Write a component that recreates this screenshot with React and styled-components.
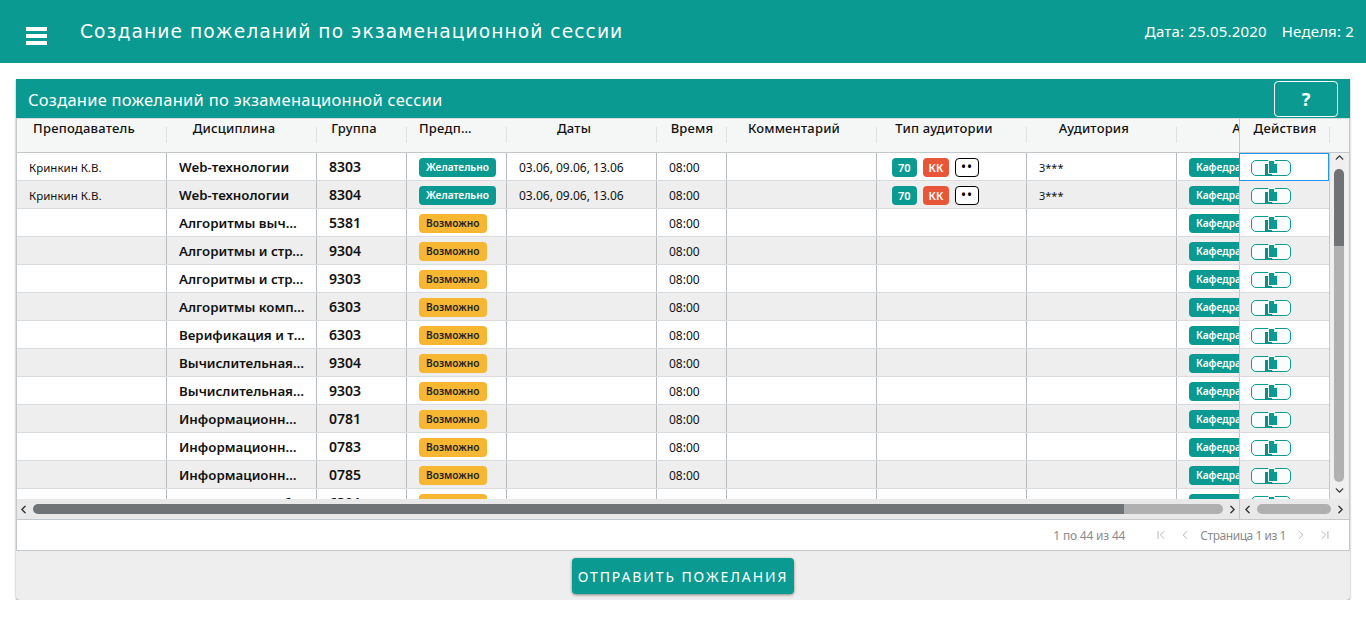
import React from 'react';
import styled, { createGlobalStyle } from 'styled-components';
import { ChevronLeft, ChevronRight, ChevronUp, ChevronDown, ChevronFirst, ChevronLast } from 'lucide-react';

const TEAL = '#0a9a91';
const LINE = '#c4c8ca';

const GlobalStyle = createGlobalStyle`
  html, body {
    margin: 0;
    padding: 0;
    background: #fff;
    font-family: "Noto Sans", "Open Sans", sans-serif;
    color: #111;
  }
  * { box-sizing: border-box; }
`;

const TopBar = styled('header')`
  display: flex;
  align-items: center;
  height: 63px;
  padding: 0 12px 0 26px;
  background: ${TEAL};
  color: #fff;
`;

const Burger = styled('div')`
  display: flex;
  flex-direction: column;
  gap: 3px;
  width: 21px;
  margin-top: 9px;
  margin-right: 33px;
  span {
    height: 4px;
    background: #fff;
  }
`;

const AppTitle = styled('h1')`
  flex: 1;
  margin: 0;
  font-family: "DejaVu Sans", sans-serif;
  font-size: 18.7px;
  font-weight: 400;
  letter-spacing: 1.05px;
`;

const TopInfo = styled('span')`
  margin-left: 15px;
  margin-bottom: 2px;
  font-size: 15px;
  letter-spacing: 0.18px;
`;

const Panel = styled('section')`
  margin: 16px 16px 0;
  height: 521px;
  display: flex;
  flex-direction: column;
  background: #eee;
  border-radius: 0 0 4px 4px;
  box-shadow: 0 1px 2px rgba(0, 0, 0, 0.45);
`;

const PanelHead = styled('div')`
  display: flex;
  align-items: center;
  justify-content: space-between;
  height: 39px;
  padding: 0 12px;
  background: ${TEAL};
  color: #fff;
`;

const PanelTitle = styled('h2')`
  margin: 1px 0 0;
  font-size: 16.5px;
  font-weight: 400;
  letter-spacing: 0.25px;
`;

const HelpButton = styled('button')`
  width: 64px;
  height: 36px;
  margin-top: 1px;
  border: 1px solid #fff;
  border-radius: 4px;
  background: transparent;
  color: #fff;
  font-family: inherit;
  font-size: 18px;
  font-weight: 700;
`;

const Grid = styled('div')`
  display: grid;
  grid-template-columns: 1222px 91px 1fr;
  grid-template-rows: 34px 346px 21px 30px;
  height: 433px;
  border: 1px solid ${LINE};
  border-top-color: #d8dadb;
  background: #fff;
`;

const HeaderRow = styled('div')`
  display: flex;
  min-width: 0;
  overflow: hidden;
  background: #f5f7f7;
  border-bottom: 1px solid ${LINE};
  ${(p) => p.$pinned && `border-left: 1px solid ${LINE};`}
`;

const HeaderCell = styled('div')`
  position: relative;
  flex: 0 0 ${(p) => p.$w}px;
  min-width: 0;
  padding: 0 ${(p) => (p.$left ? 32 : 28)}px 0 12px;
  font-size: 13px;
  font-weight: 500;
  line-height: 18px;
  letter-spacing: 0.2px;
  text-align: ${(p) => (p.$left ? 'left' : 'center')};
  white-space: nowrap;
  &::after {
    content: '';
    position: absolute;
    right: 0;
    top: 8px;
    height: 16px;
    border-right: 1px solid #dfe2e3;
  }
  ${(p) => p.$bare && 'padding: 0;'}
`;

const Ellipsis = styled('span')`
  display: block;
  overflow: hidden;
  text-overflow: ellipsis;
`;

const Corner = styled('div')`
  background: #f5f7f7;
  border-bottom: 1px solid ${LINE};
`;

const RowsView = styled('div')`
  min-width: 0;
  overflow: hidden;
  ${(p) => p.$pinned && `border-right: 1px solid ${LINE};`}
`;

const Row = styled('div')`
  display: flex;
  height: 28px;
  background: ${(p) => (p.$odd ? '#eee' : '#fff')};
  border-bottom: 1px solid #d9dcde;
`;

const Cell = styled('div')`
  flex: 0 0 ${(p) => p.$w}px;
  min-width: 0;
  display: flex;
  align-items: center;
  gap: 6px;
  padding: ${(p) => (p.$strong ? 0 : 1)}px ${(p) => (p.$strong ? 11 : 12)}px 0 ${(p) => p.$pad || 12}px;
  overflow: hidden;
  font-size: ${(p) => p.$size || 12}px;
  font-weight: ${(p) => (p.$strong ? 600 : 400)};
  white-space: nowrap;
  border-right: 1px solid #b9bcbe;
`;

const CellText = styled('span')`
  overflow: hidden;
  text-overflow: ellipsis;
`;

const Tag = styled('span')`
  flex: none;
  height: 19px;
  padding: 0 ${(p) => (p.$wide ? 7 : 6)}px;
  border-radius: 4px;
  background: ${(p) => p.$bg};
  color: ${(p) => p.$fg || '#fff'};
  font-size: ${(p) => (p.$wide ? 10.2 : 11)}px;
  font-weight: 600;
  line-height: 19px;
  ${(p) => p.$outlined && 'border: 1px solid #000; padding: 0 5px; font-size: 12px; line-height: 15px; letter-spacing: 1.5px;'}
`;

const ActionCell = styled('div')`
  height: 28px;
  display: flex;
  align-items: center;
  padding: 2px 0 0 11px;
  border-left: 1px solid ${LINE};
  background: ${(p) => (p.$odd ? '#eee' : '#fff')};
  border-bottom: 1px solid #d9dcde;
  ${(p) => p.$focused && 'outline: 1px solid #2196f3; outline-offset: -1px;'}
`;

const ActionButton = styled('button')`
  display: flex;
  align-items: center;
  justify-content: center;
  width: 40px;
  height: 16px;
  padding: 0;
  border: 1px solid ${TEAL};
  border-radius: 5px;
  background: #fafdfd;
`;

const VScroll = styled('div')`
  display: flex;
  flex-direction: column;
  align-items: center;
  padding: 0 1px 2px 0;
  background: #efefef;
  color: #333;
  svg:first-child {
    margin-top: -2px;
  }
`;

const VThumb = styled('div')`
  flex: 1;
  width: 10px;
  margin: 5px 0 2px;
  border-radius: 5px;
  background: linear-gradient(#707376 0 77px, #b0b0b0 77px);
`;

const HScroll = styled('div')`
  display: flex;
  align-items: center;
  padding: 0 ${(p) => (p.$pinned ? '2px 0 1px' : '0')};
  background: #e9e9e9;
  border-bottom: 1px solid ${LINE};
  color: #333;
  ${(p) => p.$pinned && `grid-column: 2 / -1; border-left: 1px solid ${LINE};`}
`;

const HThumb = styled('div')`
  flex: 1;
  height: 10px;
  margin: 0 3px;
  border-radius: 5px;
  background: ${(p) => p.$bg};
`;

const Pager = styled('div')`
  grid-column: 1 / -1;
  display: flex;
  align-items: center;
  justify-content: flex-end;
  padding-right: 17px;
  color: #8c8c8c;
  font-size: 12px;
  letter-spacing: -0.2px;
`;

const PagerCount = styled('span')`
  margin-right: 29px;
`;

const PagerLabel = styled('span')`
  margin: 0 8px;
  letter-spacing: -0.45px;
`;

const PagerIcon = styled('span')`
  display: flex;
  margin-left: ${(p) => p.$gap || 0}px;
  color: #a8a8a8;
`;

const Footer = styled('div')`
  flex: 1;
  display: flex;
  justify-content: center;
  padding-top: 7px;
`;

const SendButton = styled('button')`
  width: 222px;
  height: 36px;
  padding: 0;
  border: 0;
  border-radius: 4px;
  background: ${TEAL};
  color: #fff;
  font-family: inherit;
  font-size: 14px;
  letter-spacing: 1.9px;
  white-space: nowrap;
  box-shadow: 0 1px 3px rgba(0, 0, 0, 0.45);
`;

const COLUMNS = [
  { title: 'Преподаватель', w: 150 },
  { title: 'Дисциплина', w: 150 },
  { title: 'Группа', w: 90 },
  { title: 'Предпочтение', w: 100, left: true },
  { title: 'Даты', w: 150 },
  { title: 'Время', w: 70, bare: true },
  { title: 'Комментарий', w: 150 },
  { title: 'Тип аудитории', w: 150 },
  { title: 'Аудитория', w: 150 },
  { title: 'Автор', w: 165 },
];

const plain = (discipline, group) => ({ discipline, group });
const ROWS = [
  { teacher: 'Кринкин К.В.', discipline: 'Web-технологии', group: '8303', wish: true },
  { teacher: 'Кринкин К.В.', discipline: 'Web-технологии', group: '8304', wish: true },
  plain('Алгоритмы вычислительной геометрии', '5381'),
  plain('Алгоритмы и структуры данных', '9304'),
  plain('Алгоритмы и структуры данных', '9303'),
  plain('Алгоритмы компьютерной графики', '6303'),
  plain('Верификация и тестирование', '6303'),
  plain('Вычислительная математика', '9304'),
  plain('Вычислительная математика', '9303'),
  plain('Информационные технологии', '0781'),
  plain('Информационные технологии', '0783'),
  plain('Информационные технологии', '0785'),
  plain('Компьютерная безопасность', '6301'),
];

const CopyIcon = () => (
  <svg width="13" height="16" viewBox="0 0 13 16" style={{ flex: 'none' }}>
    <path d="M0 4h7v12H0z" fill="#0a8f87" />
    <path d="M3.500 .5h6l3 3v10h-9z" fill="#0a9a91" stroke="#fff" strokeWidth="1" />
    <path d="M9 0v4h4z" fill="#dff3f1" />
  </svg>
);

const Actions = ({ index }) => (
  <ActionCell $odd={index % 2 === 1} $focused={index === 0}>
    <ActionButton>
      <CopyIcon />
    </ActionButton>
  </ActionCell>
);

const App = () => {
  return (
    <>
      <GlobalStyle />
      <TopBar>
        <Burger>
          <span />
          <span />
          <span />
        </Burger>
        <AppTitle>Создание пожеланий по экзаменационной сессии</AppTitle>
        <TopInfo>Дата: 25.05.2020</TopInfo>
        <TopInfo>Неделя: 2</TopInfo>
      </TopBar>
      <Panel>
        <PanelHead>
          <PanelTitle>Создание пожеланий по экзаменационной сессии</PanelTitle>
          <HelpButton>?</HelpButton>
        </PanelHead>
        <Grid>
          <HeaderRow>
            {COLUMNS.map((col) => (
              <HeaderCell key={col.title} $w={col.w} $left={col.left} $bare={col.bare}>
                <Ellipsis>{col.title}</Ellipsis>
              </HeaderCell>
            ))}
          </HeaderRow>
          <HeaderRow $pinned>
            <HeaderCell $w={90} $bare>
              Действия
            </HeaderCell>
          </HeaderRow>
          <Corner />

          <RowsView>
            {ROWS.map((row, i) => (
              <Row key={i} $odd={i % 2 === 1}>
                <Cell $w={150} $size={11.5}>{row.teacher}</Cell>
                <Cell $w={150} $size={13.3} $strong>
                  <CellText>{row.discipline}</CellText>
                </Cell>
                <Cell $w={90} $size={14} $strong>
                  {row.group}
                </Cell>
                <Cell $w={100}>
                  {row.wish ? (
                    <Tag $bg={TEAL} $wide>Желательно</Tag>
                  ) : (
                    <Tag $bg="#f7b733" $fg="#222" $wide>Возможно</Tag>
                  )}
                </Cell>
                <Cell $w={150}>{row.wish && '03.06, 09.06, 13.06'}</Cell>
                <Cell $w={70}>08:00</Cell>
                <Cell $w={150} />
                <Cell $w={150} $pad={15}>
                  {row.wish && (
                    <>
                      <Tag $bg={TEAL}>70</Tag>
                      <Tag $bg="#e8563a">КК</Tag>
                      <Tag $bg="#fff" $fg="#000" $outlined>••</Tag>
                    </>
                  )}
                </Cell>
                <Cell $w={150} $size={11}>{row.wish && '3***'}</Cell>
                <Cell $w={165}>
                  <Tag $bg={TEAL} $wide>Кафедра</Tag>
                </Cell>
              </Row>
            ))}
          </RowsView>
          <RowsView $pinned>
            {ROWS.map((row, i) => (
              <Actions key={i} index={i} />
            ))}
          </RowsView>
          <VScroll>
            <ChevronUp size={13} strokeWidth={2.5} />
            <VThumb />
            <ChevronDown size={13} strokeWidth={2.5} />
          </VScroll>

          <HScroll>
            <ChevronLeft size={13} strokeWidth={2.5} />
            <HThumb $bg="linear-gradient(90deg, #707376 0 1091px, #b0b0b0 1091px)" />
            <ChevronRight size={13} strokeWidth={2.5} />
          </HScroll>
          <HScroll $pinned>
            <ChevronLeft size={13} strokeWidth={2.5} />
            <HThumb $bg="#b0b0b0" />
            <ChevronRight size={13} strokeWidth={2.5} />
          </HScroll>

          <Pager>
            <PagerCount>1 по 44 из 44</PagerCount>
            <PagerIcon><ChevronFirst size={14} strokeWidth={1.5} /></PagerIcon>
            <PagerIcon $gap={10}><ChevronLeft size={14} strokeWidth={1.5} /></PagerIcon>
            <PagerLabel>Страница 1 из 1</PagerLabel>
            <PagerIcon><ChevronRight size={14} strokeWidth={1.5} /></PagerIcon>
            <PagerIcon $gap={10}><ChevronLast size={14} strokeWidth={1.5} /></PagerIcon>
          </Pager>
        </Grid>
        <Footer>
          <SendButton>ОТПРАВИТЬ ПОЖЕЛАНИЯ</SendButton>
        </Footer>
      </Panel>
    </>
  );
};

export default App;
